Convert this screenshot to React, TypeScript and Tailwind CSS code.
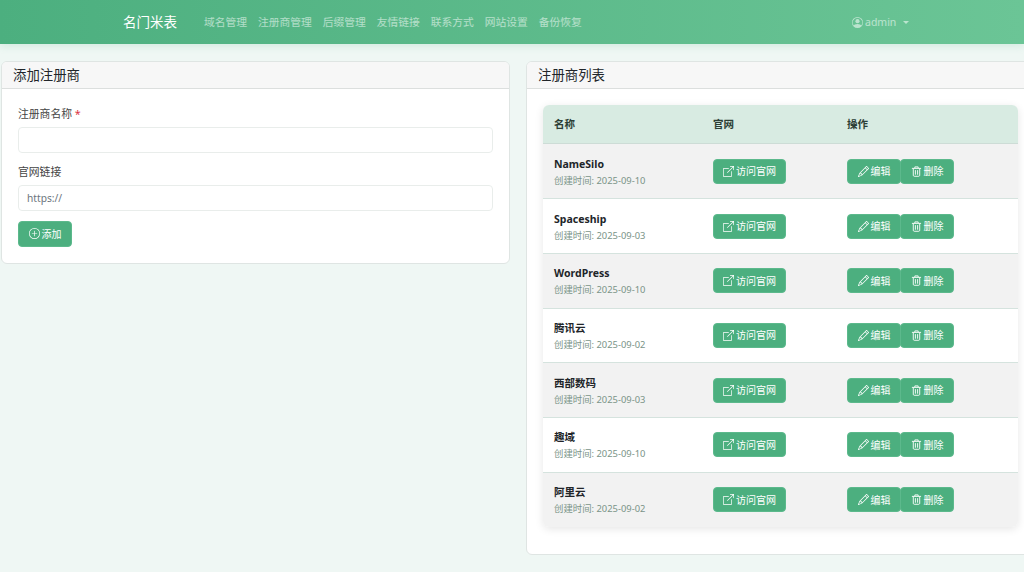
import { BsBoxArrowUpRight, BsPencil, BsPlusCircle, BsPersonCircle } from "react-icons/bs";

const FONT = "font-['Noto_Sans','Noto_Sans_CJK_SC',sans-serif]";

const rows = [
  ["NameSilo", "2025-09-10"],
  ["Spaceship", "2025-09-03"],
  ["WordPress", "2025-09-10"],
  ["腾讯云", "2025-09-02"],
  ["西部数码", "2025-09-03"],
  ["趣域", "2025-09-10"],
  ["阿里云", "2025-09-02"],
];

const nav = ["域名管理", "注册商管理", "后缀管理", "友情链接", "联系方式", "网站设置", "备份恢复"];

function TrashIcon() {
  return (
    <svg viewBox="0 0 12 12" className="w-[11px] h-[11px]" fill="none" stroke="currentColor" strokeWidth="1">
      <path d="M1 2.6h10" />
      <path d="M4.2 2.4V1h3.6v1.4" />
      <path d="M2.5 2.8v7.4c0 .6.4 1 1 1h5c.6 0 1-.4 1-1V2.8" />
      <path d="M4.8 4.5v5M7.2 4.5v5" />
    </svg>
  );
}

function Btn({ icon, label, className }: { icon: React.ReactNode; label: string; className: string }) {
  return (
    <button className={`flex items-center justify-center gap-[2px] rounded-[4px] bg-[#4caf7f] border border-[#5cb98c] text-white text-[10px] leading-none ${className}`}>
      {icon}
      <span>{label}</span>
    </button>
  );
}

export default function App() {
  return (
    <div className={`${FONT} w-[1024px] h-[572px] overflow-hidden bg-[#eff7f4] text-[#212529]`}>
      <header className="h-[44px] flex items-center pl-[123px] bg-gradient-to-r from-[#4caf7f] to-[#6bc596] shadow-[0_2px_8px_rgba(76,175,127,0.18)]">
        <span className="text-[13.5px] text-white w-[81px]">名门米表</span>
        <nav className="flex gap-[11px] text-[10.75px] text-white/55 w-[648px] pt-px">
          {nav.map((n) => (
            <span key={n}>{n}</span>
          ))}
        </nav>
        <div className="flex items-center gap-[2px] text-[10.5px] text-white/55 pt-px">
          <BsPersonCircle className="w-[11px] h-[11px]" />
          <span>admin</span>
          <span className="ml-[5px] w-0 h-0 border-x-[3px] border-x-transparent border-t-[3px] border-t-white/55" />
        </div>
      </header>

      <main className="flex gap-[16px] pl-[1px] pt-[17px] items-start">
        <section className="w-[509px] shrink-0 bg-white border border-[#dfe5e3] rounded-[6px] overflow-hidden">
          <h2 className="h-[27px] flex items-center pl-[11px] text-[13.4px] bg-[#f7f7f7] border-b border-[#dcdfde] font-normal">添加注册商</h2>
          <div className="pl-[16px] pr-[16px] pt-[17px] pb-[16.5px]">
            <label className="block text-[10.8px] leading-[16px] text-[#444] mb-[5px]">
              注册商名称 <span className="text-[#dc3545]">*</span>
            </label>
            <input className="block w-full h-[26px] border border-[#e9edeb] rounded-[4px] bg-white outline-none" />
            <label className="block text-[10.8px] leading-[16px] text-[#444] mt-[11px] mb-[5px]">官网链接</label>
            <div className="h-[26px] flex items-center px-[8px] pt-px border border-[#e9edeb] rounded-[4px] text-[10.2px] text-[#6c757d]">https://</div>
            <Btn icon={<BsPlusCircle className="w-[11px] h-[11px]" />} label="添加" className="w-[54px] h-[25.5px] mt-[10px]" />
          </div>
        </section>

        <section className="w-[509px] shrink-0 h-[494px] bg-white border border-[#dfe5e3] rounded-[6px] overflow-hidden">
          <h2 className="h-[27px] flex items-center pl-[11px] text-[13.4px] bg-[#f7f7f7] border-b border-[#dcdfde] font-normal">注册商列表</h2>
          <div className="pl-[16px] pr-[16px] pt-[16.49px]">
            <div className="rounded-[6px] overflow-hidden shadow-[0_2px_8px_rgba(0,0,0,0.1)] w-[475px]">
              <div className="grid grid-cols-[159px_134px_1fr] h-[39px] pt-px items-center bg-[#d8ebe2] border-b border-[#cddcd6] font-bold text-[10.5px] text-[#2c3e35]">
                <span className="pl-[11px]">名称</span>
                <span className="pl-[11px]">官网</span>
                <span className="pl-[11px]">操作</span>
              </div>
              {rows.map(([name, date], i) => (
                <div
                  key={name}
                  className={`grid grid-cols-[159px_134px_1fr] h-[54.7px] items-center border-b border-[#d5e3de] last:border-b-0 ${i % 2 === 0 ? "bg-[#f2f2f2]" : "bg-white"}`}
                >
                  <div className="pl-[11px] pt-px">
                    <div className="text-[10.5px] leading-[14px] font-bold text-[#212529]">{name}</div>
                    <div className="text-[9.4px] leading-[13px] mt-[3px] text-[#7a9488]">创建时间: {date}</div>
                  </div>
                  <div className="pl-[11px]">
                    <Btn icon={<BsBoxArrowUpRight className="w-[11px] h-[11px]" />} label="访问官网" className="w-[73px] h-[25px]" />
                  </div>
                  <div className="pl-[11px] flex">
                    <Btn icon={<BsPencil className="w-[11px] h-[11px]" />} label="编辑" className="w-[54px] h-[25px]" />
                    <Btn icon={<TrashIcon />} label="删除" className="w-[54px] h-[25px] -ml-px" />
                  </div>
                </div>
              ))}
            </div>
          </div>
        </section>
      </main>
    </div>
  );
}
